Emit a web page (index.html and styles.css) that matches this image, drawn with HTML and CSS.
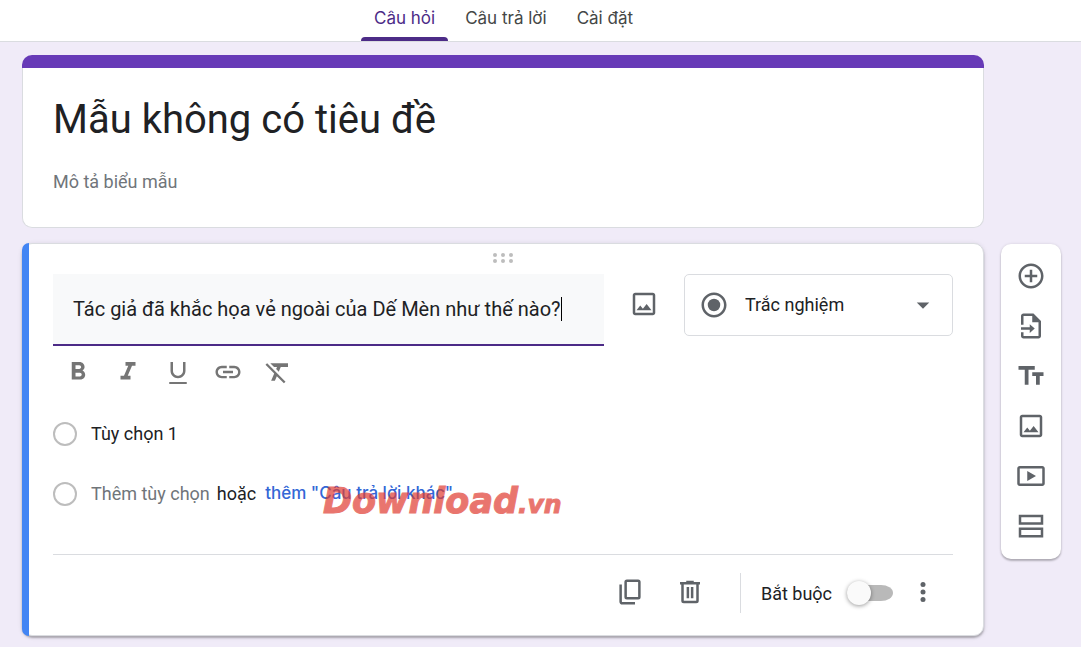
FILE: index.html
```html
<!doctype html>
<html lang="vi">
    <head>
        <meta charset="UTF-8" />
        <meta name="viewport" content="width=device-width, initial-scale=1.0" />
        <title>Mẫu không có tiêu đề</title>
        <link rel="stylesheet" href="styles.css">
    </head>
    <body>
        <nav class="tabs">
            <a class="tab active" href="#questions">Câu hỏi</a>
            <a class="tab" href="#responses">Câu trả lời</a>
            <a class="tab" href="#settings">Cài đặt</a>
        </nav>

        <main class="editor">
            <section class="card title-card">
                <div class="theme-bar"></div>
                <input class="form-title" type="text" aria-label="Tiêu đề" value="Mẫu không có tiêu đề" />
                <input class="form-desc" type="text" aria-label="Mô tả biểu mẫu" placeholder="Mô tả biểu mẫu" />
            </section>

            <section class="card question-card" id="questions">
                <div class="drag-handle">
                    <svg width="20" height="12" viewBox="0 0 20 12">
                        <circle cx="2" cy="3" r="2" /><circle cx="10" cy="3" r="2" /><circle cx="18" cy="3" r="2" />
                        <circle cx="2" cy="9" r="2" /><circle cx="10" cy="9" r="2" /><circle cx="18" cy="9" r="2" />
                    </svg>
                </div>

                <div class="question-row">
                    <div class="question-field">
                        <input class="question-input" type="text" aria-label="Câu hỏi" value="Tác giả đã khắc họa vẻ ngoài của Dế Mèn như thế nào?" />
                        <span class="caret"></span>
                    </div>
                    <button class="icon-btn image-btn" type="button" aria-label="Thêm hình ảnh">
                        <svg class="icon" viewBox="0 0 24 24"><path d="M19 5v14H5V5h14m0-2H5c-1.1 0-2 .9-2 2v14c0 1.1.9 2 2 2h14c1.1 0 2-.9 2-2V5c0-1.1-.9-2-2-2zM14.1 11.9l-3 3.9L9 13.1 6 17h12z" /></svg>
                    </button>
                    <div class="type-picker">
                        <svg class="icon type-icon" viewBox="0 0 24 24"><circle cx="12" cy="12" r="5" /><path d="M12 2C6.48 2 2 6.48 2 12s4.48 10 10 10 10-4.48 10-10S17.52 2 12 2zm0 18c-4.41 0-8-3.59-8-8s3.59-8 8-8 8 3.59 8 8-3.59 8-8 8z" /></svg>
                        <select class="type-select" aria-label="Loại câu hỏi">
                            <option>Trắc nghiệm</option>
                        </select>
                        <svg class="icon type-arrow" viewBox="0 0 24 24"><path d="M7 10l5 5 5-5z" /></svg>
                    </div>
                </div>

                <div class="format-bar">
                    <button class="icon-btn" type="button" aria-label="In đậm">
                        <svg class="icon" viewBox="0 0 24 24"><path d="M15.6 10.79c.97-.67 1.65-1.77 1.65-2.79 0-2.26-1.75-4-4-4H7v14h7.04c2.09 0 3.71-1.7 3.71-3.79 0-1.52-.86-2.82-2.15-3.42zM10 6.5h3c.83 0 1.5.67 1.5 1.5s-.67 1.5-1.5 1.5h-3v-3zm3.5 9H10v-3h3.5c.83 0 1.5.67 1.5 1.5s-.67 1.5-1.5 1.5z" /></svg>
                    </button>
                    <button class="icon-btn" type="button" aria-label="In nghiêng">
                        <svg class="icon" viewBox="0 0 24 24"><path d="M10 4v3h2.21l-3.42 8H6v3h8v-3h-2.21l3.42-8H18V4z" /></svg>
                    </button>
                    <button class="icon-btn" type="button" aria-label="Gạch chân">
                        <svg class="icon" viewBox="0 0 24 24"><path d="M12 17c3.31 0 6-2.69 6-6V4h-2v7c0 2.2-1.8 4-4 4s-4-1.8-4-4V4H6v7c0 3.31 2.69 6 6 6zm-7 3v1.6h14V20H5z" /></svg>
                    </button>
                    <button class="icon-btn" type="button" aria-label="Chèn đường liên kết">
                        <svg class="icon" viewBox="0 0 24 24"><path d="M3.9 12c0-1.71 1.39-3.1 3.1-3.1h4V7H7c-2.76 0-5 2.24-5 5s2.24 5 5 5h4v-1.9H7c-1.71 0-3.1-1.39-3.1-3.1zM8 13h8v-2H8v2zm9-6h-4v1.9h4c1.71 0 3.1 1.39 3.1 3.1s-1.39 3.1-3.1 3.1h-4V17h4c2.76 0 5-2.24 5-5s-2.24-5-5-5z" /></svg>
                    </button>
                    <button class="icon-btn" type="button" aria-label="Xóa định dạng">
                        <svg class="icon" viewBox="0 0 24 24"><path d="M3.27 5L2 6.27l6.97 6.97L6.5 19h3l1.57-3.66L16.73 21 18 19.73 3.55 5.27 3.27 5zM6 5v.18L8.82 8h2.4l-.72 1.68 2.1 2.1L14.21 8H20V5H6z" /></svg>
                    </button>
                </div>

                <div class="options">
                    <div class="option">
                        <input class="radio" type="radio" name="answer" id="option1" />
                        <label for="option1">Tùy chọn 1</label>
                    </div>
                    <div class="option">
                        <input class="radio" type="radio" name="answer" id="optionNew" />
                        <label class="muted" for="optionNew">Thêm tùy chọn</label>
                        <span class="or">hoặc</span>
                        <button class="add-other" type="button">thêm "Câu trả lời khác"</button>
                        <div class="watermark">Download<span class="watermark-tld">.vn</span></div>
                    </div>
                </div>

                <div class="card-footer">
                    <button class="icon-btn footer-btn" type="button" aria-label="Sao chép">
                        <svg class="icon line" viewBox="0 0 24 24"><rect x="8.5" y="3" width="11" height="14" rx="1" /><path d="M4.5 6v13.5c0 .8.7 1.5 1.5 1.5H16" /></svg>
                    </button>
                    <button class="icon-btn footer-btn" type="button" aria-label="Xóa">
                        <svg class="icon line" viewBox="0 0 24 24"><path d="M4 5h16M9 4h6M6 5v14c0 .6.4 1 1 1h10c.6 0 1-.4 1-1V5M10.3 8v9M13.7 8v9" /></svg>
                    </button>
                    <div class="required">
                        <label for="required">Bắt buộc</label>
                        <input class="switch" type="checkbox" role="switch" id="required" />
                    </div>
                    <button class="icon-btn footer-btn" type="button" aria-label="Tùy chọn khác">
                        <svg class="icon" viewBox="0 0 24 24"><circle cx="12" cy="6" r="2" /><circle cx="12" cy="12" r="2" /><circle cx="12" cy="18" r="2" /></svg>
                    </button>
                </div>
            </section>

            <aside class="side-bar">
                <button class="icon-btn" type="button" aria-label="Thêm câu hỏi">
                    <svg class="icon" viewBox="0 0 24 24"><path d="M13 7h-2v4H7v2h4v4h2v-4h4v-2h-4V7zm-1-5C6.48 2 2 6.48 2 12s4.48 10 10 10 10-4.48 10-10S17.52 2 12 2zm0 18c-4.41 0-8-3.59-8-8s3.59-8 8-8 8 3.59 8 8-3.59 8-8 8z" /></svg>
                </button>
                <button class="icon-btn" type="button" aria-label="Nhập câu hỏi">
                    <svg class="icon" viewBox="0 0 24 24"><path d="M14 2H6c-1.1 0-2 .9-2 2v7h2V4h7v5h5v11H6v-3H4v3c0 1.1.9 2 2 2h12c1.1 0 2-.9 2-2V8zM4 13v2h7v2.5l4-3.5-4-3.5V13z" /></svg>
                </button>
                <button class="icon-btn" type="button" aria-label="Thêm tiêu đề và mô tả">
                    <svg class="icon" viewBox="0 0 24 24"><path d="M2 4v3h5v12h3V7h5V4zM22 9h-9v3h3v7h3v-7h3z" /></svg>
                </button>
                <button class="icon-btn" type="button" aria-label="Thêm hình ảnh">
                    <svg class="icon" viewBox="0 0 24 24"><path d="M19 5v14H5V5h14m0-2H5c-1.1 0-2 .9-2 2v14c0 1.1.9 2 2 2h14c1.1 0 2-.9 2-2V5c0-1.1-.9-2-2-2zM14.1 11.9l-3 3.9L9 13.1 6 17h12z" /></svg>
                </button>
                <button class="icon-btn" type="button" aria-label="Thêm video">
                    <svg class="icon" viewBox="0 0 24 24"><path d="M21 4H3c-1.1 0-2 .9-2 2v12c0 1.1.9 2 2 2h18c1.1 0 2-.9 2-2V6c0-1.1-.9-2-2-2zm0 14H3V6h18v12zM9 8v8l7-4z" /></svg>
                </button>
                <button class="icon-btn" type="button" aria-label="Thêm phần">
                    <svg class="icon line" viewBox="0 0 24 24"><rect x="3.2" y="4" width="17.6" height="6" /><rect x="3.2" y="14.2" width="17.6" height="6" /></svg>
                </button>
            </aside>
        </main>
    </body>
</html>
```

FILE: styles.css
```css
* {
    box-sizing: border-box;
}

body {
    margin: 0;
    background-color: #f0ebf8;
    color: #202124;
    font-family: Roboto, sans-serif;
    font-size: 18px;
}

input,
select,
button {
    margin: 0;
    padding: 0;
    border: none;
    background: none;
    color: inherit;
    font: inherit;
    outline: none;
}

button {
    cursor: pointer;
}

/* Tabs */
.tabs {
    display: flex;
    justify-content: center;
    gap: 4px;
    height: 42px;
    padding: 0 96px 0 22px;
    background-color: white;
    border-bottom: 1px solid #dadce0;
}

.tab {
    position: relative;
    padding: 6px 13px 0;
    color: #444746;
    font-family: Inter, sans-serif;
    font-size: 17px;
    line-height: 24px;
    text-decoration: none;
}

.tab.active {
    color: #4c2b87;
}

.tab.active::after {
    content: "";
    position: absolute;
    left: 0;
    right: 0;
    bottom: 0;
    height: 4px;
    border-radius: 4px 4px 0 0;
    background-color: #4c2b87;
}

/* Cards */
.editor {
    display: grid;
    grid-template-columns: 1fr 60px;
    gap: 15px 17px;
    padding: 13px 20px 11px 22px;
}

.card {
    border: 1px solid #dadce0;
    border-radius: 10px;
    background-color: white;
}

.title-card {
    display: flex;
    flex-direction: column;
    border-top: none;
    padding-bottom: 31px;
}

.theme-bar {
    height: 13px;
    margin: 0 -1px;
    border-radius: 10px 10px 0 0;
    background-color: #673ab7;
}

.form-title {
    height: 56px;
    margin: 23px 30px 0;
    font-size: 40px;
}

.form-desc {
    height: 30px;
    margin: 19px 30px 0;
}

.form-desc::placeholder {
    color: #70757a;
    opacity: 1;
}

.question-card {
    position: relative;
    grid-column: 1;
    padding: 0 30px;
    box-shadow: 0 2px 2px rgba(0, 0, 0, 0.24), 0 1px 5px rgba(0, 0, 0, 0.12);
}

.question-card::before {
    content: "";
    position: absolute;
    top: -1px;
    bottom: -1px;
    left: -1px;
    width: 7px;
    border-radius: 10px 0 0 10px;
    background-color: #4285f4;
}

.drag-handle {
    display: flex;
    justify-content: center;
    height: 30px;
    padding-top: 8px;
    fill: #bdbdbd;
}

.question-row {
    display: flex;
    align-items: flex-start;
    gap: 20px;
}

.question-field {
    display: flex;
    flex: 1;
    align-items: center;
    height: 72px;
    padding: 0 20px;
    background-color: #f8f9fa;
    border-bottom: 2px solid #4c2b87;
    font-size: 20px;
}

.question-input {
    field-sizing: content;
    min-width: 0;
}

.caret {
    width: 1px;
    height: 24px;
    background-color: black;
}

.icon-btn {
    display: flex;
    flex: none;
    align-items: center;
    justify-content: center;
    width: 50px;
    height: 50px;
}

.icon {
    width: 30px;
    height: 30px;
    fill: #5f6368;
}

.line {
    fill: none;
    stroke: #5f6368;
    stroke-width: 2;
}

.image-btn {
    width: 40px;
    height: 60px;
}

.type-picker {
    display: grid;
    grid-template-columns: 60px 1fr 60px;
    align-items: center;
    width: 269px;
    height: 62px;
}

.type-icon,
.type-arrow {
    grid-row: 1;
    justify-self: center;
    pointer-events: none;
    z-index: 1;
}

.type-icon {
    grid-column: 1;
}

.type-arrow {
    grid-column: 3;
}

.type-select {
    grid-area: 1 / 1 / 2 / 4;
    height: 100%;
    padding: 0 60px 2px;
    appearance: none;
    border: 1px solid #dadce0;
    border-radius: 5px;
}

.format-bar {
    display: flex;
    padding-top: 1px;
}

.format-bar .icon {
    fill: #757575;
}

/* Answers */
.options {
    padding: 7px 0 30px;
    border-bottom: 1px solid #dadce0;
}

.option {
    position: relative;
    display: flex;
    align-items: center;
    height: 60px;
}

.option label,
.or,
.add-other {
    padding-bottom: 2px;
}

.radio {
    width: 24px;
    height: 24px;
    margin-right: 14px;
    appearance: none;
    border: 2px solid #bdbdbd;
    border-radius: 50%;
}

.muted {
    color: #70757a;
}

.or {
    margin: 0 9px 0 7px;
}

.add-other {
    color: #3367d6;
    font-family: Inter, sans-serif;
    font-size: 17px;
    font-weight: 500;
}

.watermark {
    position: absolute;
    left: 270px;
    top: 17px;
    color: #e03c31;
    font-family: "DejaVu Sans", sans-serif;
    font-size: 35px;
    font-style: italic;
    font-weight: bold;
    line-height: 40px;
    opacity: 0.7;
    pointer-events: none;
    -webkit-text-stroke: 1px #e03c31;
}

.watermark-tld {
    font-size: 25px;
}

/* Footer */
.card-footer {
    display: flex;
    align-items: center;
    justify-content: flex-end;
    height: 80px;
    padding-bottom: 4px;
}

.footer-btn {
    width: 60px;
    padding-bottom: 2px;
}

.required {
    display: flex;
    align-items: center;
    gap: 15px;
    height: 40px;
    margin-left: 20px;
    padding-left: 20px;
    border-left: 1px solid #dadce0;
}

.switch {
    display: flex;
    align-items: center;
    width: 46px;
    height: 24px;
    appearance: none;
    background: linear-gradient(#b9b9b9, #b9b9b9) content-box;
    padding: 4px 0;
    border-radius: 12px;
}

.switch::before {
    content: "";
    flex: none;
    width: 24px;
    height: 24px;
    border-radius: 50%;
    background-color: #fafafa;
    box-shadow: 0 1px 4px rgba(0, 0, 0, 0.4);
}

/* Side toolbar */
.side-bar {
    grid-column: 2;
    grid-row: 2;
    display: flex;
    flex-direction: column;
    align-items: center;
    align-self: start;
    margin-top: 1px;
    padding: 7px 0 8px;
    border-radius: 10px;
    background-color: white;
    box-shadow: 0 2px 2px rgba(0, 0, 0, 0.24), 0 0 3px rgba(0, 0, 0, 0.12);
}
```
